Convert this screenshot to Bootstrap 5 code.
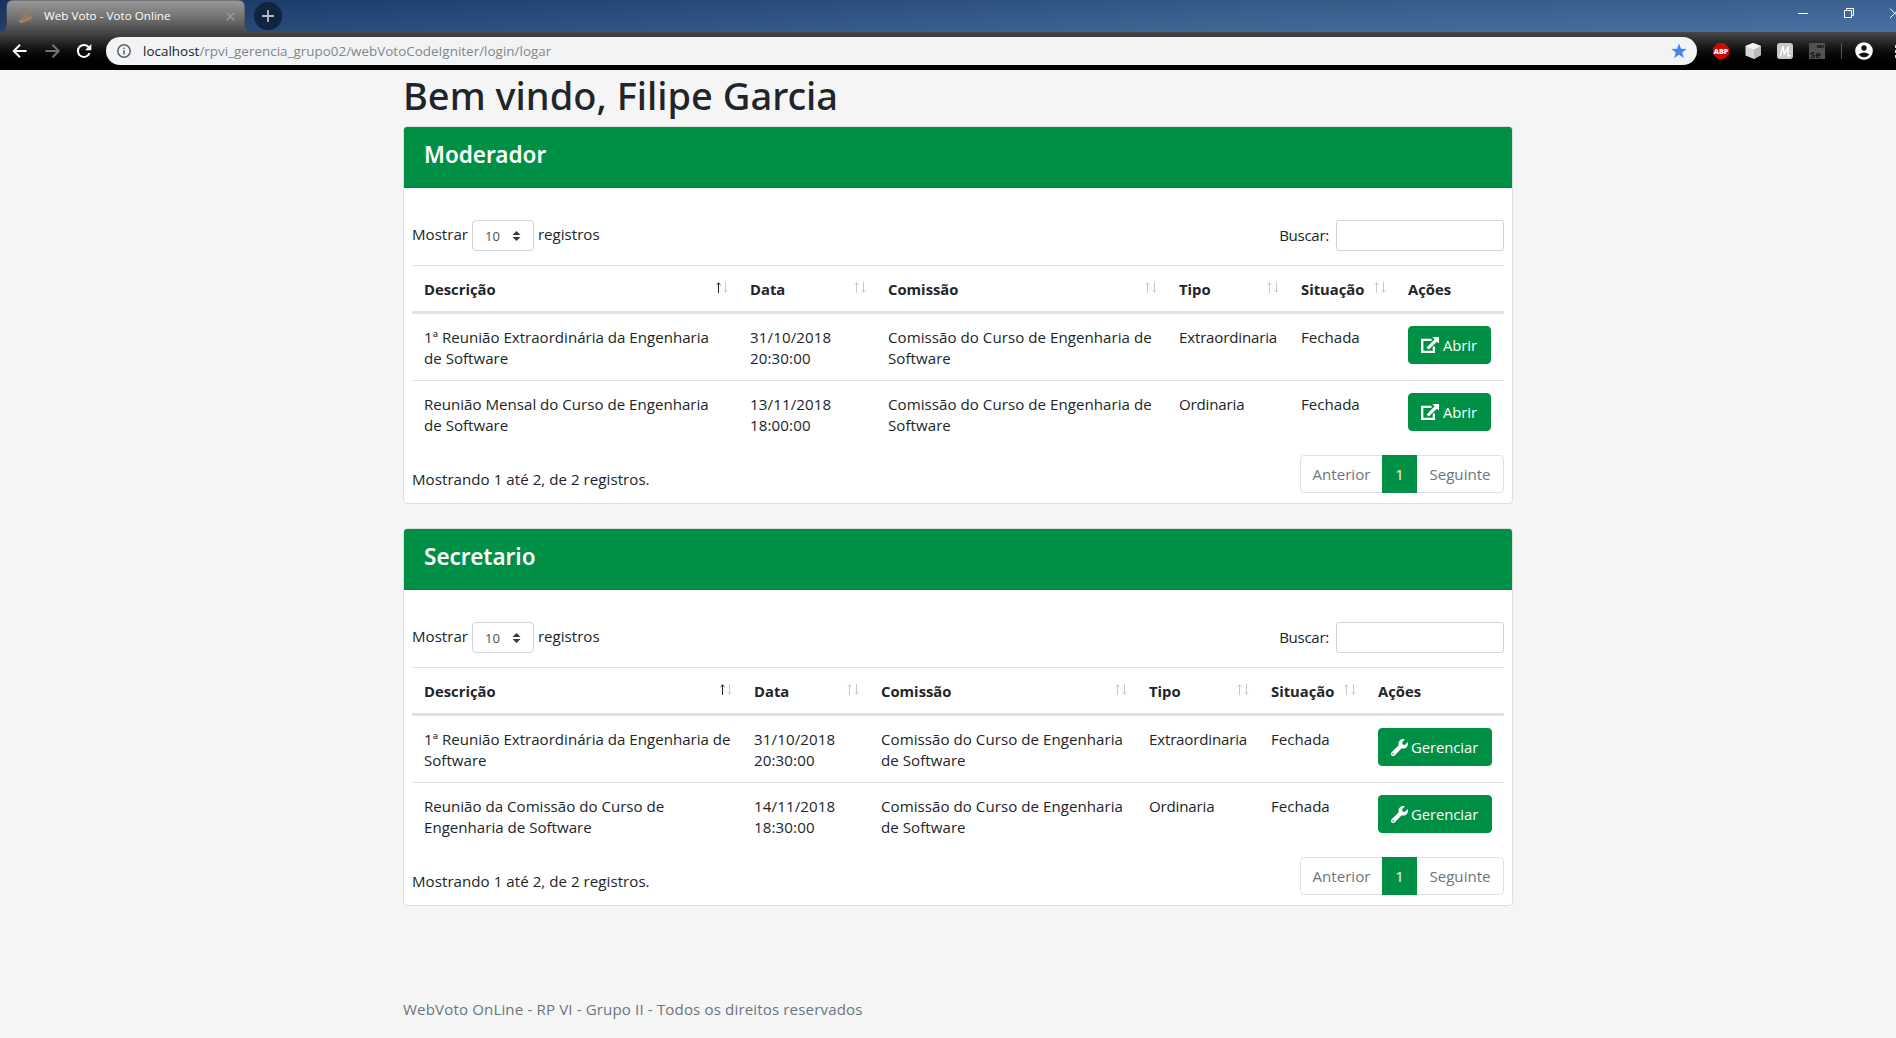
<!DOCTYPE html>
<html lang="pt-br">
<head>
<meta charset="utf-8">
<title>Web Voto - Voto Online</title>
<link href="https://cdn.jsdelivr.net/npm/bootstrap@5.3.0/dist/css/bootstrap.min.css" rel="stylesheet">
<style>
  body { font-family: "Open Sans", "Noto Sans", sans-serif; font-size: 15.1px; line-height: 21px; color: #212529; background: #f5f5f5; height: 1038px; overflow: hidden; }
  svg { display: block; flex: none; }

  /* browser frame */
  .titlebar { height: 32px; background: linear-gradient(180deg, rgba(0,0,30,.08), rgba(255,255,255,.05)), linear-gradient(90deg, #17365f 0, #1f4373 300px, #284f80 700px, #38618f 1250px, #40699c 1896px); }
  .tab-shape { width: 251px; height: 32px; }
  .tab-bg { position: absolute; left: 0; top: 0; }
  .tab-text { font-size: 11.6px; letter-spacing: .04px; line-height: 32px; color: #fff; padding-left: 10px; width: 160px; }
  .new-tab { width: 28px; height: 28px; background: #10233f; margin: 2px 0 0 3px; }
  .toolbar { height: 38px; background: linear-gradient(180deg, #484848 0, #2b2b2b 9px, #0d0d0d 19px, #000 28px); padding: 5px 0 5px 11px; }
  .address { width: 1591px; height: 28px; background: #f1f3f4; margin-left: 14px; padding: 0 10px 0 11px; font-size: 13.4px; letter-spacing: .03px; line-height: 28px; color: #80868b; }
  .address b { font-weight: 400; color: #202124; }

  /* page */
  .page { width: 1110px; margin-left: 403px; }
  h1 { font: 500 38px/48px "Noto Sans", sans-serif; margin: 0; padding-top: 1px; height: 56px; }
  .panel { border: 1px solid #dfdfdf; border-radius: 4px; height: 378px; margin-bottom: 24px; }
  .panel-head { background: #009045; color: #fff; height: 61px; padding: 12px 20px 0; border-bottom: 1px solid #00833f; border-radius: 3px 3px 0 0; }
  .panel-head h4 { font: 600 22.5px/31px "Noto Sans", sans-serif; margin: 0; }
  .tools { height: 31px; margin: 24px 0 14px; }
  .tool-text { padding-bottom: 2px; }
  .len-select { width: 62px; height: 31px; border: 1px solid #ced4da; border-radius: 4px; font-size: 13.1px; color: #495057; margin: 0 4px; padding: 1px 12px 0 12px; }
  .search-box { width: 168px; height: 31px; min-height: 31px; border: 1px solid #ced4da; border-radius: 3px; padding: 0; margin-left: 7px; }
  .search-label { letter-spacing: -.3px; }
  .grid { width: 1092px; table-layout: fixed; border-collapse: separate; border-spacing: 0; }
  .grid th { font-size: 14.8px; height: 49px; padding: 13px 12px 11px; border-top: 1px solid #dee2e6; border-bottom: 3px solid #dee2e6; vertical-align: top; white-space: nowrap; }
  .grid td { height: 66px; padding: 13px 12px 0; vertical-align: top; }
  .grid tr + tr td { height: 67px; border-top: 1px solid #dee2e6; }
  .grid td.act { padding-top: 12px; }
  .grid td.act, .grid .nw { white-space: nowrap; }
  .grid td:nth-child(2) { letter-spacing: .12px; }
  .grid td:nth-child(3) { letter-spacing: .04px; }
  .grid td:nth-child(4) { letter-spacing: -.18px; }
  .sorts { margin: 3px -2px 0 0; }
  .btn-green { --bs-btn-color: #fff; --bs-btn-bg: #009045; --bs-btn-border-color: #009045; --bs-btn-hover-bg: #007d3b; --bs-btn-hover-color: #fff; height: 38px; padding: 0 11px 0 12px; font-size: 14.8px; letter-spacing: -.05px; border-radius: 4px; gap: 4px; display: flex; align-items: center; }
  .w-abrir { width: 83px; } .w-ger { width: 114px; gap: 3px; }
  .bottom { height: 38px; margin-top: 8px; }
  .info { margin-top: 14px; letter-spacing: .04px; }
  .pagination { --bs-pagination-color: #6c757d; --bs-pagination-border-color: #dee2e6; --bs-pagination-active-bg: #009045; --bs-pagination-active-border-color: #009045; --bs-pagination-disabled-color: #6c757d; --bs-pagination-disabled-bg: #fff; --bs-pagination-border-radius: 4px; margin: 0; }
  .pagination .page-link { height: 38px; padding: 0; line-height: 36px; font-size: 15.1px; text-align: center; }
  .p-prev .page-link { width: 83px; } .p-cur .page-link { width: 35px; } .p-next .page-link { width: 88px; }
  .foot { color: #6c757d; padding-top: 69px; white-space: nowrap; letter-spacing: .13px; }
</style>
</head>
<body>
<svg width="0" height="0" class="position-absolute">
  <symbol id="sort" viewBox="0 0 13 11"><path d="M3.500 1v10M1.500 2.800 3.500.9 5.500 2.800" fill="none" stroke="#c8c8c8"/><path d="M10.500 0v10M8.500 8.200 10.500 10.100 12.500 8.200" fill="none" stroke="#c8c8c8"/></symbol>
  <symbol id="sort-asc" viewBox="0 0 13 11"><path d="M3.500 1v10M1.500 2.800 3.500.9 5.500 2.800" fill="none" stroke="#212529"/><path d="M10.500 0v10M8.500 8.200 10.500 10.100 12.500 8.200" fill="none" stroke="#c8c8c8"/></symbol>
  <symbol id="open" viewBox="0 0 18 16"><path d="M10.500 2.900H1.200V14.800H12.900V9.500" fill="none" stroke="#fff" stroke-width="2.300"/><path d="M11.300 0H18V6.600L16 4.700 7.700 12.600 5.600 10.500 13.600 2.300z" fill="#fff"/></symbol>
  <symbol id="wrench" viewBox="0 0 512 512"><path fill="#fff" d="M507.730 109.100c-2.240-9.030-13.540-12.090-20.120-5.510l-74.360 74.360-67.880-11.310-11.310-67.880 74.360-74.360c6.620-6.620 3.430-17.900-5.660-20.160-47.380-11.740-99.550.910-136.580 37.930-39.640 39.640-50.550 97.100-34.050 147.200L18.740 402.760c-24.990 24.990-24.990 65.510 0 90.500 24.990 24.990 65.510 24.990 90.500 0l213.210-213.210c50.120 16.710 107.470 5.680 147.370-34.220 37.070-37.070 49.700-89.320 37.910-136.730zM64 472c-13.250 0-24-10.750-24-24 0-13.260 10.750-24 24-24s24 10.740 24 24c0 13.250-10.750 24-24 24z"/></symbol>
  <symbol id="updown" viewBox="0 0 8 10"><path d="M4 0 8 4H0zM4 10 0 6h8z" fill="#343a40"/></symbol>
</svg>

<header>
  <div class="titlebar d-flex">
    <div class="tab-shape position-relative d-flex align-items-center">
      <svg class="tab-bg" width="251" height="32" viewBox="0 0 251 32"><defs><linearGradient id="tg" x1="0" y1="0" x2="0" y2="1"><stop offset="0" stop-color="#999"/><stop offset=".5" stop-color="#767676"/><stop offset="1" stop-color="#484848"/></linearGradient></defs><path d="M0 32Q6.500 31 6.500 24V7Q6.500 0 13 0H238Q245 0 245 7V24Q245 31 251 32z" fill="url(#tg)" stroke="#39424f" stroke-width=".8"/></svg>
      <svg class="position-relative ms-3 me-0" width="18" height="16" viewBox="-2 0 18 16"><path d="M5 .8 10.200.4 10.600 7.500 14 8.200Q15 10 13 11.500L8 13.800 3 15.300Q.6 15 1 12.500L4.600 8.500z" fill="#937a66"/><path d="M1.600 13.800 7 12.600 13.300 9.600" stroke="#a88b73" fill="none"/></svg>
      <div class="tab-text position-relative text-nowrap">Web Voto - Voto Online</div>
      <svg class="position-relative ms-auto me-3" width="9" height="9" viewBox="0 0 9 9"><path d="M.8.8 8.200 8.200M8.200.8.8 8.200" stroke="#9b9b9b" stroke-width="1.300"/></svg>
    </div>
    <div class="new-tab rounded-circle d-flex align-items-center justify-content-center"><svg width="12" height="12" viewBox="0 0 12 12"><path d="M6 0v12M0 6h12" stroke="#b7bdc6" stroke-width="1.800"/></svg></div>
    <svg class="ms-auto" width="98" height="26" viewBox="1798 0 98 26" fill="none" stroke="#fff"><path d="M1798 13.500h10M1844.500 10.500h7v7h-7zM1846.500 10.500v-2h7v7h-2M1890 8.500l10 10M1890 18l10-10"/></svg>
  </div>
  <div class="toolbar d-flex align-items-center">
    <svg width="81" height="28" viewBox="0 0 81 28" fill="none"><path d="M15.500 14H3M9 7.800 2.800 14 9 20.200" stroke="#fff" stroke-width="2"/><path d="M34.500 14H47M41.500 7.800 47.700 14 41.500 20.200" stroke="#747474" stroke-width="2"/><path d="M78.500 16.200A6 6 0 1 1 77.800 10.400" stroke="#fff" stroke-width="2"/><path d="M80.300 7v6.200h-6.200z" fill="#fff"/></svg>
    <div class="address rounded-pill d-flex align-items-center">
      <svg width="14" height="14" viewBox="0 0 14 14"><circle cx="7" cy="7" r="6.200" fill="none" stroke="#5f6368" stroke-width="1.500"/><path d="M7 6.200v4.200M7 3.500v1.600" stroke="#5f6368" stroke-width="1.600"/></svg>
      <span class="ps-2 ms-1 text-nowrap"><b>localhost</b>/rpvi_gerencia_grupo02/webVotoCodeIgniter/login/logar</span>
      <svg class="ms-auto" width="16" height="16" viewBox="0 0 16 16"><path d="M8 .5 10 5.800 15.600 6 11.200 9.500 12.800 15 8 11.800 3.200 15 4.800 9.500.4 6 6 5.800z" fill="#4285f4"/></svg>
    </div>
    <svg class="ms-auto" width="185" height="28" viewBox="1711 37 185 28">
      <path d="M1717.700 43h6.600l4.700 4.700v6.600l-4.700 4.700h-6.600l-4.700-4.700v-6.600z" fill="#d00808"/>
      <text x="1721" y="54" text-anchor="middle" font-family="Open Sans, sans-serif" font-weight="800" font-size="7.600" fill="#fff" textLength="14.500" lengthAdjust="spacingAndGlyphs">ABP</text>
      <path d="M1753 43 1761 46V55L1754 59 1745.500 55.500V46z" fill="#d6d6d6"/><path d="M1753 43 1761 46 1754 49.500 1745.500 46z" fill="#f4f4f4"/><path d="M1754 49.500 1761 46V55L1754 59z" fill="#b9b9b9"/>
      <rect x="1777" y="43" width="16" height="16" rx="3" fill="#c9c9c9"/><path d="M1780 56.500 1783 46.500 1784.300 54 1788.500 46.500 1787.800 55.500Q1789 56.500 1790.500 55" fill="none" stroke="#fff" stroke-width="1.500"/>
      <rect x="1809" y="43" width="16" height="16" fill="#525252"/><path d="M1817 45h5v3h-5zM1822 46l2-1v3l-2-1z" fill="#252525"/>
      <text x="1810" y="57.500" font-family="Open Sans, sans-serif" font-weight="700" font-size="9.500" fill="#151515">Se</text>
      <path d="M1841.500 43v16" stroke="#555"/>
      <circle cx="1864" cy="51" r="8.800" fill="#fff"/><circle cx="1864" cy="48" r="2.700" fill="#111"/><path d="M1858.500 54.500Q1864 50.500 1869.500 54.500 1864 60 1858.500 54.500z" fill="#111"/>
      <path d="M1895 45h3v3h-3zM1895 50h3v3h-3zM1895 55h3v3h-3z" fill="#ddd"/>
    </svg>
  </div>
</header>

<main class="page">
  <h1>Bem vindo, Filipe Garcia</h1>

  <section class="panel bg-white">
    <div class="panel-head"><h4>Moderador</h4></div>
    <div class="px-2 pt-2">
      <div class="tools d-flex justify-content-between">
        <div class="d-flex align-items-center"><span class="tool-text">Mostrar</span><div class="len-select d-flex justify-content-between align-items-center"><span>10</span><svg width="9" height="10"><use href="#updown"/></svg></div><span class="tool-text">registros</span></div>
        <label class="d-flex align-items-center"><span class="search-label">Buscar:</span><input type="text" class="form-control search-box"></label>
      </div>
      <table class="grid">
        <colgroup><col style="width:326px"><col style="width:138px"><col style="width:291px"><col style="width:122px"><col style="width:107px"><col style="width:108px"></colgroup>
        <thead><tr>
          <th><div class="d-flex justify-content-between">Descrição<svg class="sorts" width="13" height="11"><use href="#sort-asc"/></svg></div></th>
          <th><div class="d-flex justify-content-between">Data<svg class="sorts" width="13" height="11"><use href="#sort"/></svg></div></th>
          <th><div class="d-flex justify-content-between">Comissão<svg class="sorts" width="13" height="11"><use href="#sort"/></svg></div></th>
          <th><div class="d-flex justify-content-between">Tipo<svg class="sorts" width="13" height="11"><use href="#sort"/></svg></div></th>
          <th><div class="d-flex justify-content-between">Situação<svg class="sorts" width="13" height="11"><use href="#sort"/></svg></div></th>
          <th>Ações</th>
        </tr></thead>
        <tbody>
          <tr><td class="nw">1ª Reunião Extraordinária da Engenharia<br>de Software</td><td>31/10/2018<br>20:30:00</td><td class="nw">Comissão do Curso de Engenharia de<br>Software</td><td class="nw">Extraordinaria</td><td>Fechada</td><td class="act"><a class="btn btn-green w-abrir" href="#"><svg width="18" height="16"><use href="#open"/></svg>Abrir</a></td></tr>
          <tr><td class="nw">Reunião Mensal do Curso de Engenharia<br>de Software</td><td>13/11/2018<br>18:00:00</td><td class="nw">Comissão do Curso de Engenharia de<br>Software</td><td class="nw">Ordinaria</td><td>Fechada</td><td class="act"><a class="btn btn-green w-abrir" href="#"><svg width="18" height="16"><use href="#open"/></svg>Abrir</a></td></tr>
        </tbody>
      </table>
      <div class="bottom d-flex justify-content-between">
        <div class="info">Mostrando 1 até 2, de 2 registros.</div>
        <ul class="pagination"><li class="page-item disabled p-prev"><a class="page-link">Anterior</a></li><li class="page-item active p-cur"><a class="page-link">1</a></li><li class="page-item disabled p-next"><a class="page-link">Seguinte</a></li></ul>
      </div>
    </div>
  </section>

  <section class="panel bg-white">
    <div class="panel-head"><h4>Secretario</h4></div>
    <div class="px-2 pt-2">
      <div class="tools d-flex justify-content-between">
        <div class="d-flex align-items-center"><span class="tool-text">Mostrar</span><div class="len-select d-flex justify-content-between align-items-center"><span>10</span><svg width="9" height="10"><use href="#updown"/></svg></div><span class="tool-text">registros</span></div>
        <label class="d-flex align-items-center"><span class="search-label">Buscar:</span><input type="text" class="form-control search-box"></label>
      </div>
      <table class="grid">
        <colgroup><col style="width:330px"><col style="width:127px"><col style="width:268px"><col style="width:122px"><col style="width:107px"><col style="width:138px"></colgroup>
        <thead><tr>
          <th><div class="d-flex justify-content-between">Descrição<svg class="sorts" width="13" height="11"><use href="#sort-asc"/></svg></div></th>
          <th><div class="d-flex justify-content-between">Data<svg class="sorts" width="13" height="11"><use href="#sort"/></svg></div></th>
          <th><div class="d-flex justify-content-between">Comissão<svg class="sorts" width="13" height="11"><use href="#sort"/></svg></div></th>
          <th><div class="d-flex justify-content-between">Tipo<svg class="sorts" width="13" height="11"><use href="#sort"/></svg></div></th>
          <th><div class="d-flex justify-content-between">Situação<svg class="sorts" width="13" height="11"><use href="#sort"/></svg></div></th>
          <th>Ações</th>
        </tr></thead>
        <tbody>
          <tr><td class="nw">1ª Reunião Extraordinária da Engenharia de<br>Software</td><td>31/10/2018<br>20:30:00</td><td class="nw">Comissão do Curso de Engenharia<br>de Software</td><td class="nw">Extraordinaria</td><td>Fechada</td><td class="act"><a class="btn btn-green w-ger" href="#"><svg width="17" height="17"><use href="#wrench"/></svg>Gerenciar</a></td></tr>
          <tr><td class="nw">Reunião da Comissão do Curso de<br>Engenharia de Software</td><td>14/11/2018<br>18:30:00</td><td class="nw">Comissão do Curso de Engenharia<br>de Software</td><td class="nw">Ordinaria</td><td>Fechada</td><td class="act"><a class="btn btn-green w-ger" href="#"><svg width="17" height="17"><use href="#wrench"/></svg>Gerenciar</a></td></tr>
        </tbody>
      </table>
      <div class="bottom d-flex justify-content-between">
        <div class="info">Mostrando 1 até 2, de 2 registros.</div>
        <ul class="pagination"><li class="page-item disabled p-prev"><a class="page-link">Anterior</a></li><li class="page-item active p-cur"><a class="page-link">1</a></li><li class="page-item disabled p-next"><a class="page-link">Seguinte</a></li></ul>
      </div>
    </div>
  </section>

  <footer class="foot">WebVoto OnLine - RP VI - Grupo II - Todos os direitos reservados</footer>
</main>
<script src="https://cdn.jsdelivr.net/npm/bootstrap@5.3.0/dist/js/bootstrap.bundle.min.js"></script>
</body>
</html>
